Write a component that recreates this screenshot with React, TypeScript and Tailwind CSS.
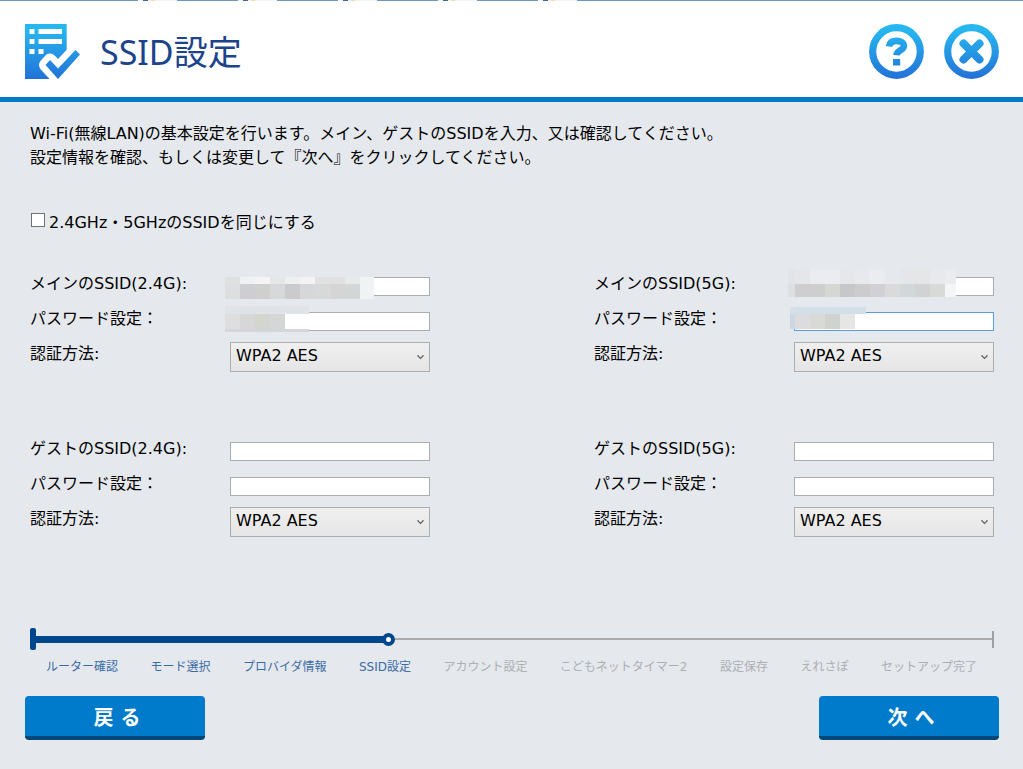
import { useState } from "react";
import clsx from "clsx";

type Mosaic = { className: string; rows: { height: string; cells: string[] }[] };

type Field = {
  id: string;
  label: string;
  kind: "text" | "select";
  focused?: boolean;
  mosaic?: Mosaic;
};

const mainSsid24: Mosaic = {
  className: "-left-[5px] top-0 w-[149px]",
  rows: [
    { height: "h-[7px]", cells: ["#dfe0e2", "#f0f1f2", "#f4f4f5", "#e5e6e6", "#eeeff0", "#f3f3f4", "#e1e1e2", "#e1e1e2", "#e8e9e9", "#f1f2f4"] },
    { height: "h-[15px]", cells: ["#dddedf", "#cecdd2", "#cfcfcd", "#d7d8da", "#cbcacd", "#d7d7da", "#d7d9d9", "#d5d5d3", "#d2d6d5", "#f1f2f4"] },
  ],
};

const mainPass24: Mosaic = {
  className: "-left-[5px] -top-1.5 w-[84px]",
  rows: [
    { height: "h-2", cells: ["#e0e3e7", "#dfe3e8", "#dfe3e8", "#dfe3e8", "#e0e3e8", "#e0e3e8"] },
    { height: "h-[15px]", cells: ["#dedede", "#d7d7d8", "#d3d5cf", "#d5d7d6", "#ffffff", "#ffffff"] },
    { height: "h-[3px]", cells: ["#d5d6dc", "#d3d5db", "#d2d5da", "#d2d5da", "#d4d6dc", "#d4d6dc"] },
  ],
};

const mainSsid5: Mosaic = {
  className: "-left-1.5 -top-2 w-[168px] [&_span:first-child]:w-[7px]",
  rows: [
    { height: "h-[15px]", cells: ["#e2e4e8", "#e5e6e9", "#ebecef", "#ebecef", "#e6e7eb", "#e8e9ed", "#ebecf0", "#e7e8eb", "#e5e6e9", "#e4e6e8", "#e8e9ec", "#ebecef"] },
    { height: "h-[13px]", cells: ["#dcdfe3", "#d0cdcf", "#cecece", "#d5d7d3", "#c7c6c9", "#cdcccd", "#d2d0d4", "#dadada", "#d2d7d7", "#d1d3d2", "#d8dad8", "#f4f5f7"] },
  ],
};

const mainPass5: Mosaic = {
  className: "-left-1 -top-[5px] w-[76px] [&_span:first-child]:w-[5px]",
  rows: [
    { height: "h-[7px]", cells: ["#d7dfe8", "#d2dfe9", "#d2dfe9", "#d2dfe9", "#d2dfe9", "#d2dfe9"] },
    { height: "h-[15px]", cells: ["#cbd7e3", "#dcdcde", "#d9dad6", "#d0d2d0", "#e5e6e5", "#ffffff"] },
  ],
};

const groups: Field[][] = [
  [
    { id: "main-ssid-24", label: "メインのSSID(2.4G):", kind: "text", mosaic: mainSsid24 },
    { id: "main-pass-24", label: "パスワード設定：", kind: "text", mosaic: mainPass24 },
    { id: "main-auth-24", label: "認証方法:", kind: "select" },
  ],
  [
    { id: "main-ssid-5", label: "メインのSSID(5G):", kind: "text", mosaic: mainSsid5 },
    { id: "main-pass-5", label: "パスワード設定：", kind: "text", focused: true, mosaic: mainPass5 },
    { id: "main-auth-5", label: "認証方法:", kind: "select" },
  ],
  [
    { id: "guest-ssid-24", label: "ゲストのSSID(2.4G):", kind: "text" },
    { id: "guest-pass-24", label: "パスワード設定：", kind: "text" },
    { id: "guest-auth-24", label: "認証方法:", kind: "select" },
  ],
  [
    { id: "guest-ssid-5", label: "ゲストのSSID(5G):", kind: "text" },
    { id: "guest-pass-5", label: "パスワード設定：", kind: "text" },
    { id: "guest-auth-5", label: "認証方法:", kind: "select" },
  ],
];

const steps = [
  "ルーター確認",
  "モード選択",
  "プロバイダ情報",
  "SSID設定",
  "アカウント設定",
  "こどもネットタイマー2",
  "設定保存",
  "えれさぽ",
  "セットアップ完了",
];
const currentStep = 3;

function MosaicPatch({ mosaic }: { mosaic: Mosaic }) {
  return (
    <div className={clsx("pointer-events-none absolute", mosaic.className)}>
      {mosaic.rows.map((row, i) => (
        <div key={i} className={clsx("flex", row.height)}>
          {row.cells.map((color, j) => (
            <span key={j} className="w-[15px] last:flex-1" style={{ backgroundColor: color }} />
          ))}
        </div>
      ))}
    </div>
  );
}

function FieldRow({ field }: { field: Field }) {
  return (
    <div className="flex h-[35px] items-center">
      <label htmlFor={field.id} className="w-[200px] shrink-0 pb-1.5 leading-6 whitespace-nowrap">
        {field.label}
      </label>
      <div className="relative flex w-[200px]">
        {field.kind === "text" ? (
          <input
            id={field.id}
            type="text"
            className={clsx(
              "h-[19px] w-full border bg-white px-1 text-sm outline-none",
              field.focused ? "border-[#569de5]" : "border-[#abadb3]"
            )}
          />
        ) : (
          <>
            <select
              id={field.id}
              className="h-[30px] w-full appearance-none border border-[#acacac] bg-linear-to-b from-[#f0f0f0] to-[#e5e5e5] px-[5px] pb-0.5 outline-none"
            >
              <option>WPA2 AES</option>
            </select>
            <svg className="pointer-events-none absolute top-3 right-1.5" width="7" height="6" viewBox="0 0 7 6" fill="none">
              <path d="M1 1v1l2.500 2.500L6 2V1" stroke="#606060" strokeWidth="1.200" />
            </svg>
          </>
        )}
        {field.mosaic && <MosaicPatch mosaic={field.mosaic} />}
      </div>
    </div>
  );
}

function TopStrip() {
  return (
    <div className="flex h-px overflow-hidden bg-[#6f97c1] pl-[138px]">
      {[0, 1, 2, 3, 4].map((i) => (
        <div key={i} className="mr-[61px] flex w-[39px] shrink-0 bg-[#f1f3f5]">
          <span className="ml-[5px] w-[5px] bg-[#426799]" />
          <span className="ml-[3px] w-1 bg-[#f0dca4]" />
        </div>
      ))}
    </div>
  );
}

function SettingsIcon() {
  return (
    <svg width="55" height="55" viewBox="0 0 55 55" aria-hidden="true">
      <defs>
        <linearGradient id="doc-fill" gradientUnits="userSpaceOnUse" x1="0" y1="0" x2="0" y2="55">
          <stop offset="0.1" stopColor="#27b7ef" />
          <stop offset="1" stopColor="#2271d8" />
        </linearGradient>
      </defs>
      <path d="M0 0h41.700v55H0z" fill="url(#doc-fill)" />
      <path
        d="M4.500 5h5v5h-5zM13.500 5H37v5H13.500zM4.500 15h5v5h-5zM13.500 15H37v5H13.500zM4.500 25h5v5h-5zM13.500 25h5v5h-5z"
        fill="#fff"
      />
      <path
        d="M20.500 41 25 36l8 8.500L50.500 26 55 30.500 33 54.500z"
        fill="#fff"
        stroke="#fff"
        strokeWidth="13"
        strokeLinejoin="round"
      />
      <path d="M20.500 41 25 36l8 8.500L50.500 26 55 30.500 33 55z" fill="url(#doc-fill)" />
    </svg>
  );
}

function RoundIcon({ kind }: { kind: "help" | "close" }) {
  const fill = `url(#ring-${kind})`;
  return (
    <svg width="55" height="55" viewBox="0 0 55 55" fill="none" aria-hidden="true">
      <defs>
        <linearGradient id={`ring-${kind}`} gradientUnits="userSpaceOnUse" x1="0" y1="0" x2="0" y2="55">
          <stop offset="0.1" stopColor="#27b7ef" />
          <stop offset="1" stopColor="#2271d8" />
        </linearGradient>
      </defs>
      <circle cx="27.500" cy="27.500" r="23.800" stroke={fill} strokeWidth="7.200" />
      {kind === "help" ? (
        <>
          <path d="M20 22.500c.6-4 3.400-5.600 7.500-5.600 4.300 0 7.400 1.800 7.400 5.100 0 4.600-6.900 3.600-7.400 9.300" stroke={fill} strokeWidth="6.600" />
          <path d="M24 35h7.200v6.500H24z" fill={fill} />
        </>
      ) : (
        <path d="M19.500 19.500l16 16M35.500 19.500l-16 16" stroke={fill} strokeWidth="8" strokeLinecap="round" />
      )}
    </svg>
  );
}

function ProgressTrack() {
  return (
    <div className="mr-[29px] ml-[30px] flex h-[22px] items-center">
      <span className="h-[22px] w-1.5 rounded-xs bg-[#00468c]" />
      <span className="h-[7px] w-[36%] bg-[#00468c]" />
      <span className="-ml-px size-[13px] rounded-full border-4 border-[#00468c] bg-white" />
      <span className="h-0.5 flex-1 bg-[#acacae]" />
      <span className="h-[17px] w-0.5 bg-[#a0a0a2]" />
    </div>
  );
}

const buttonClass =
  "h-11 w-[180px] rounded-sm border-b-4 border-[#00487a] bg-[#007aca] pt-1 pl-1 text-xl font-bold text-white";

export default function App() {
  const [sameSsid, setSameSsid] = useState(false);

  return (
    <div className="min-h-screen bg-[#e5e8ed] font-['DejaVu_Sans','Noto_Sans_CJK_JP',sans-serif] text-base text-black">
      <TopStrip />
      <header className="flex h-[101px] items-center border-b-5 border-[#007ac8] bg-white pt-1 pr-6 pl-[25px]">
        <SettingsIcon />
        <h1 className="ml-5 pt-0.5 font-['Noto_Sans','Noto_Sans_CJK_JP',sans-serif] text-[34px] leading-none text-[#1c448c]">
          SSID設定
        </h1>
        <div className="ml-auto flex gap-5">
          <button type="button" aria-label="ヘルプ">
            <RoundIcon kind="help" />
          </button>
          <button type="button" aria-label="閉じる">
            <RoundIcon kind="close" />
          </button>
        </div>
      </header>

      <main className="pt-5">
        <p className="px-[30px] leading-6">
          Wi-Fi(無線LAN)の基本設定を行います。メイン、ゲストのSSIDを入力、又は確認してください。
          <br />
          設定情報を確認、もしくは変更して『次へ』をクリックしてください。
        </p>

        <label className="mt-[41px] ml-[31px] flex w-fit items-center gap-1 leading-6">
          <input
            type="checkbox"
            checked={sameSsid}
            onChange={(e) => setSameSsid(e.target.checked)}
            className="mb-1.5 size-3.5 appearance-none border border-[#707070] bg-white checked:bg-[#007ac8]"
          />
          2.4GHz・5GHzのSSIDを同じにする
        </label>

        <div className="mt-[34px] mr-[29px] ml-[30px] grid grid-cols-[400px_400px] justify-between gap-y-15">
          {groups.map((fields) => (
            <div key={fields[0].id}>
              {fields.map((f) => (
                <FieldRow key={f.id} field={f} />
              ))}
            </div>
          ))}
        </div>

        <div className="mt-[89px]">
          <ProgressTrack />
          <ol className="mt-[9px] flex justify-between pr-[46px] pl-[46px] text-xs leading-4 whitespace-nowrap">
            {steps.map((step, i) => (
              <li key={step} className={i <= currentStep ? "text-[#3a6ca5]" : "text-[#adafb3]"}>
                {step}
              </li>
            ))}
          </ol>
        </div>

        <div className="mt-[21px] flex justify-between pr-6 pb-7 pl-[25px]">
          <button type="button" className={buttonClass}>
            戻 る
          </button>
          <button type="button" className={buttonClass}>
            次 へ
          </button>
        </div>
      </main>
    </div>
  );
}
